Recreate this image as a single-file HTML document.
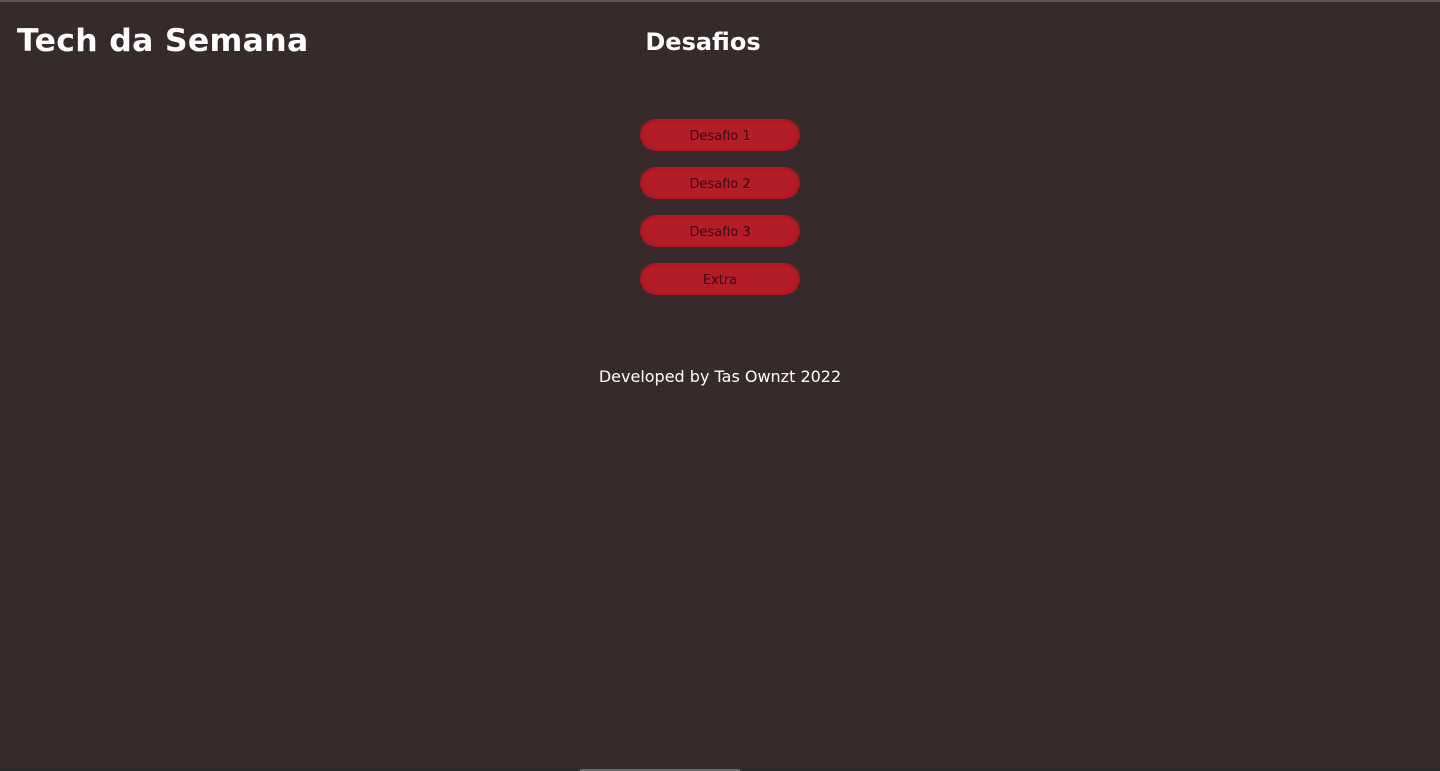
<!DOCTYPE html>
<html><head><meta charset="utf-8"><style>
html,body{margin:0;padding:0;}
body{width:1440px;height:771px;background:#362a2b;font-family:"DejaVu Sans","Liberation Sans",sans-serif;position:relative;overflow:hidden;}
.top{position:absolute;left:0;top:0;width:1440px;height:2px;background:#5a5556;}
h1{position:absolute;left:17px;top:23px;margin:0;font-size:31.5px;font-weight:bold;color:#fff;letter-spacing:0.3px;}
h2{position:absolute;left:0;width:1406px;text-align:center;top:28px;margin:0;font-size:24px;font-weight:bold;color:#fff;}
.btn{position:absolute;left:640px;width:160px;height:32px;border-radius:16px;background:#b41c27;box-shadow:inset 0 0 4px rgba(0,0,0,0.2);color:#3a0a0e;font-size:13px;text-align:center;line-height:35px;}
.foot{position:absolute;left:0;width:1440px;text-align:center;top:367px;color:#fff;font-size:16px;}
.sb{position:absolute;left:580px;top:769px;width:160px;height:2px;background:#6a6a6a;}
.sbt{position:absolute;left:0;top:769px;width:1440px;height:2px;background:#2a2a2a;}
</style></head><body>
<div class="top"></div>
<h1>Tech da Semana</h1>
<h2>Desafios</h2>
<div class="btn" style="top:119px">Desafio 1</div>
<div class="btn" style="top:167px">Desafio 2</div>
<div class="btn" style="top:215px">Desafio 3</div>
<div class="btn" style="top:263px">Extra</div>
<div class="foot">Developed by Tas Ownzt 2022</div>
<div class="sbt"></div><div class="sb"></div>
</body></html>
